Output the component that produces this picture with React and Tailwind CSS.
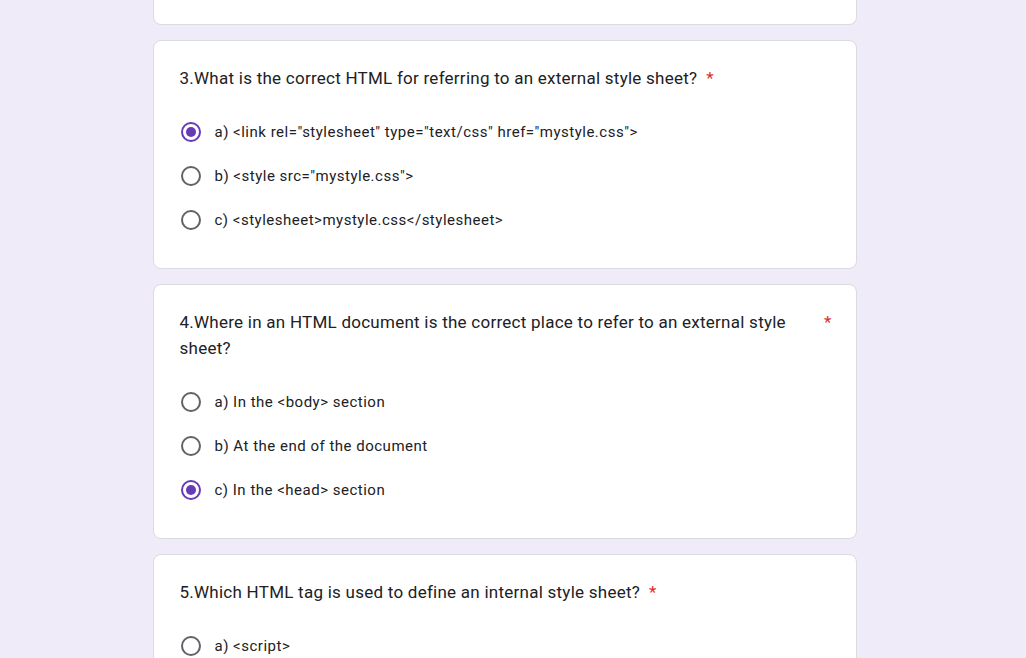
const questions = [
  {
    title: "3.What is the correct HTML for referring to an external style sheet?",
    options: [
      'a) <link rel="stylesheet" type="text/css" href="mystyle.css">',
      'b) <style src="mystyle.css">',
      "c) <stylesheet>mystyle.css</stylesheet>",
    ],
    selected: 0,
  },
  {
    title: "4.Where in an HTML document is the correct place to refer to an external style sheet?",
    options: ["a) In the <body> section", "b) At the end of the document", "c) In the <head> section"],
    selected: 2,
  },
  {
    title: "5.Which HTML tag is used to define an internal style sheet?",
    options: ["a) <script>", "b) <css>", "c) <style>"],
    selected: -1,
  },
];

function Radio({ checked }) {
  return (
    <div
      className={
        "w-5 h-5 rounded-full border-2 flex items-center justify-center shrink-0 " +
        (checked ? "border-[#673ab7]" : "border-[#5f6368]")
      }
    >
      {checked && <div className="w-[10px] h-[10px] rounded-full bg-[#673ab7]" />}
    </div>
  );
}

function QuestionCard({ q }) {
  return (
    <div className="bg-white border border-[#dadce0] rounded-lg px-6 pt-6 pb-[26px]">
      <div className="flex items-start pl-[2px] text-[17px] leading-[26px] text-[#202124] tracking-[0.25px]">
        <span className="min-w-0">{q.title}</span>
        <span className="text-[#d93025] pl-[9px] shrink-0">*</span>
      </div>
      <div className="mt-[19px] flex flex-col">
        {q.options.map((opt, i) => (
          <div key={i} className="h-11 flex items-center pl-[3px] gap-[14px]">
            <Radio checked={i === q.selected} />
            <span className="text-[15px] text-[#202124] tracking-[0.5px]">{opt}</span>
          </div>
        ))}
      </div>
    </div>
  );
}

export default function App() {
  return (
    <div className="h-screen bg-[#f0ebf8] pr-[17px] overflow-hidden" style={{ fontFamily: "Roboto, 'Noto Sans', sans-serif" }}>
      <div className="w-[704px] mx-auto flex flex-col gap-[15px]">
        <div className="h-[25px] bg-white border border-t-0 border-[#dadce0] rounded-b-lg" />
        {questions.map((q, i) => (
          <QuestionCard key={i} q={q} />
        ))}
      </div>
    </div>
  );
}
